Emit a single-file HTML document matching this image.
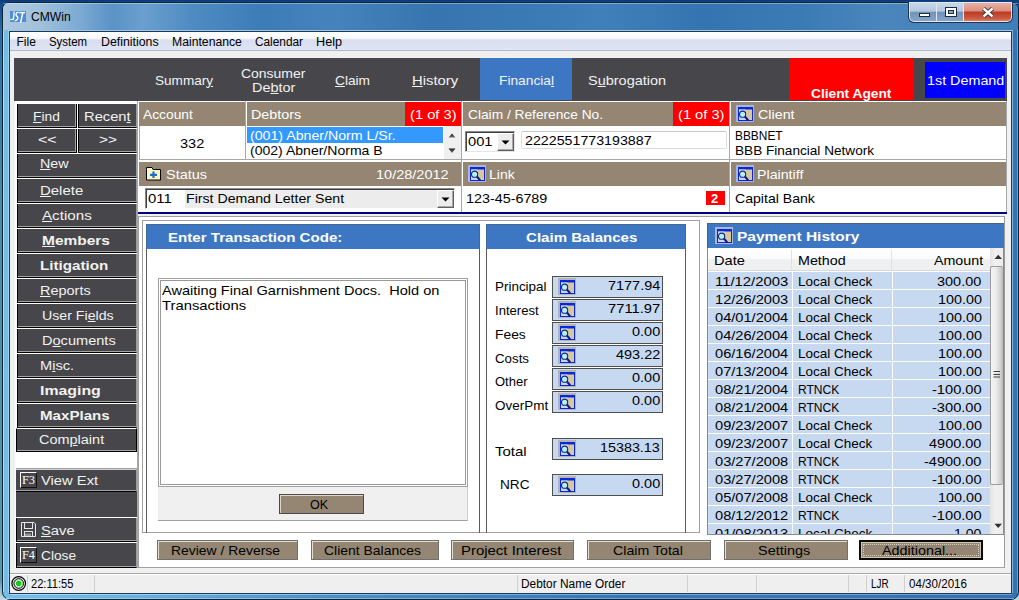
<!DOCTYPE html>
<html><head><meta charset="utf-8"><title>CMWin</title>
<style>
*{margin:0;padding:0;box-sizing:border-box}
html,body{width:1019px;height:600px;overflow:hidden;background:#3f86b0}
body{position:relative;font-family:"Liberation Sans", sans-serif;color:#000}
.a{position:absolute}
.t{position:absolute;white-space:nowrap;line-height:1;transform-origin:0 0}
.nb{position:absolute;background:#47474b;border-left:1px solid #000;border-bottom:1px solid #000;border-right:1px solid #9c9c9c;box-shadow:inset 0 -1px 0 #a4a4a4}
u{text-decoration:underline;text-underline-offset:1px;text-decoration-thickness:1px}
</style></head><body>
<div class="a" style="left:0;top:0;width:1019px;height:600px;background:linear-gradient(180deg,#0c3a74 0,#104888 3px,#2a6ea6 30px,#4a8a9c 200px,#5a98a8 580px,#c8dce4 600px)"></div>
<div class="a" style="left:2px;top:2px;width:1017px;height:598px;border-radius:7px 7px 8px 8px;border:1px solid #0e2438;background:linear-gradient(90deg,#76bde6 0,#6cb0dc 120px,#4d8fc4 320px,#3a78b4 600px,#3672ae 1019px)"></div>
<div class="a" style="left:3px;top:3px;width:1015px;height:27px;border-radius:6px 6px 0 0;background:linear-gradient(90deg,#adc8df 0,#a2c2dc 35px,#7eabd3 75px,#5a93c6 110px,#6a9fcf 140px,#4e8bc2 190px,#3c7cb7 260px,#4583bd 330px,#3775b0 430px,#3a7ab4 520px,#4080ba 600px,#3474b0 700px,#3b7bb5 800px,#4a86bc 880px,#3f7fb8 1015px)"></div>
<div class="a" style="left:3px;top:3px;width:1015px;height:1px;background:rgba(255,255,255,0.35);border-radius:6px 6px 0 0"></div>
<div class="a" style="left:1011px;top:30px;width:1px;height:564px;background:#1c3550"></div>
<div class="a" style="left:1012px;top:30px;width:1px;height:563px;background:#84b4e0"></div>
<div class="a" style="left:1017px;top:30px;width:1px;height:563px;background:#6aa0d4"></div>
<div class="a" style="left:3px;top:30px;width:1px;height:562px;background:#a8dcf8"></div>
<div class="a" style="left:8px;top:30px;width:1px;height:563px;background:#9cd2f2"></div>
<svg class="a" style="left:10px;top:11px" width="17" height="12" viewBox="0 0 17 12"><rect x="0" y="0" width="16" height="11" fill="#4f8ed4"/><path d="M4.2 0.5 L3.4 8.2 L0.3 8.6" stroke="#fff" stroke-width="1.3" fill="none"/><path d="M8.6 1.4 Q6.2 1 6 3.4 Q6 4.6 7.2 5.4 Q8.4 6.2 7.6 8 Q7 9.6 4.6 9.8" stroke="#fff" stroke-width="1.3" fill="none"/><path d="M9.2 1.6 L15 1.6" stroke="#fff" stroke-width="1.4" fill="none"/><path d="M12.8 1.6 L10.6 11.6" stroke="#fff" stroke-width="1.5" fill="none"/></svg>
<div class="a" style="left:908px;top:2px;width:105px;height:21px;border-radius:0 0 6px 6px;background:#1e3450"></div>
<div class="a" style="left:909px;top:2px;width:103px;height:20px;border-radius:0 0 5px 5px;overflow:hidden;background:#dfe8f2"><div class="a" style="left:1px;top:1px;width:26px;height:18px;border-radius:0 0 0 4px;background:linear-gradient(180deg,#c9d9ea 0,#b4c8de 45%,#7193b9 52%,#86a6c8 100%)"></div><div class="a" style="left:28px;top:1px;width:26px;height:18px;background:linear-gradient(180deg,#c9d9ea 0,#b4c8de 45%,#7193b9 52%,#86a6c8 100%)"></div><div class="a" style="left:55px;top:1px;width:47px;height:18px;border-radius:0 0 4px 0;background:linear-gradient(180deg,#e9b0a4 0,#dc9080 42%,#bb3c24 52%,#cc5a40 85%,#dc7c60 100%)"></div></div>
<div class="a" style="left:919px;top:13px;width:11px;height:4px;background:#fff;border:1px solid #1c2c40"></div>
<div class="a" style="left:945px;top:7px;width:12px;height:10px;background:#fff;border:1px solid #1c2c40"></div>
<div class="a" style="left:948px;top:10px;width:6px;height:4px;background:#8aa8c8;border:1px solid #1c2c40"></div>
<svg class="a" style="left:981px;top:7px" width="14" height="11" viewBox="0 0 14 11"><path d="M2.5 1.5 L11.5 9.5 M11.5 1.5 L2.5 9.5" stroke="#2a2a2a" stroke-width="4.2"/><path d="M2.5 1.5 L11.5 9.5 M11.5 1.5 L2.5 9.5" stroke="#fff" stroke-width="2.4"/></svg>
<div class="a" style="left:9px;top:30px;width:1003px;height:1px;background:#9ec6e6"></div>
<div class="a" style="left:9px;top:31px;width:1003px;height:563px;background:#f0f0f0;border:1px solid #1e3a58"></div>
<div class="a" style="left:10px;top:594px;width:1002px;height:1px;background:linear-gradient(90deg,#a8dcf8,#78aee0 500px,#6aa0d4)"></div>
<div class="a" style="left:6px;top:598px;width:1008px;height:1px;background:linear-gradient(90deg,#a0d4f4,#70a8dc 500px,#6aa0d4)"></div>
<div class="a" style="left:10px;top:32px;width:1001px;height:19px;background:linear-gradient(180deg,#ffffff 0,#f7f8fc 35%,#d9ddee 45%,#dce1f1 75%,#e0e6f4 100%);border-bottom:1px solid #b4b9c8"></div>
<div class="a" style="left:14px;top:58px;width:993px;height:43px;background:#47474b"></div>
<div class="a" style="left:480px;top:58px;width:92px;height:42px;background:#3d77c4"></div>
<div class="a" style="left:789px;top:58px;width:125px;height:42px;background:#ff0000"></div>
<div class="a" style="left:925px;top:62px;width:80px;height:36px;background:#0000ff"></div>
<div class="a" style="left:15px;top:101px;width:123px;height:467px;background:#fff"></div>
<div class="a" style="left:137px;top:101px;width:1px;height:467px;background:#a8a8a8"></div>
<div class="nb" style="left:17px;top:104px;width:60px;height:24px;border-right-color:#000;box-shadow:inset -1px -1px 0 #a4a4a4"></div>
<div class="nb" style="left:78px;top:104px;width:59px;height:24px"></div>
<div class="nb" style="left:17px;top:129px;width:60px;height:24px;border-right-color:#000;box-shadow:inset -1px -1px 0 #a4a4a4"></div>
<div class="nb" style="left:78px;top:129px;width:59px;height:24px"></div>
<div class="nb" style="left:17px;top:154px;width:120px;height:24px"></div>
<div class="nb" style="left:17px;top:179px;width:120px;height:24px"></div>
<div class="nb" style="left:17px;top:204px;width:120px;height:24px"></div>
<div class="nb" style="left:17px;top:229px;width:120px;height:24px"></div>
<div class="nb" style="left:17px;top:254px;width:120px;height:24px"></div>
<div class="nb" style="left:17px;top:279px;width:120px;height:24px"></div>
<div class="nb" style="left:17px;top:304px;width:120px;height:24px"></div>
<div class="nb" style="left:17px;top:329px;width:120px;height:24px"></div>
<div class="nb" style="left:17px;top:354px;width:120px;height:24px"></div>
<div class="nb" style="left:17px;top:379px;width:120px;height:24px"></div>
<div class="nb" style="left:17px;top:404px;width:120px;height:24px"></div>
<div class="nb" style="left:16px;top:428px;width:121px;height:24px;border-right-color:#000;border-top:1px solid #fff"></div>
<div class="a" style="left:16px;top:468px;width:121px;height:1px;background:#a0a0a0"></div>
<div class="nb" style="left:16px;top:469px;width:121px;height:23px;border-left:none;border-top:1px solid #d0d0d0"></div>
<div class="a" style="left:20px;top:472px;width:17px;height:16px;background:#47474b;border-top:1px solid #fff;border-left:1px solid #fff;border-right:1px solid #111;border-bottom:1px solid #111"></div>
<div class="a" style="left:16px;top:492px;width:121px;height:25px;background:#47474b"></div>
<div class="nb" style="left:16px;top:518px;width:121px;height:24px"></div>
<svg class="a" style="left:20px;top:521px" width="17" height="17" viewBox="0 0 17 17"><path d="M1.5 1.5 H14 L15.5 3 V15.5 H1.5 Z" fill="none" stroke="#e8e8e8" stroke-width="1"/><rect x="4.5" y="1.5" width="8" height="6" fill="none" stroke="#e8e8e8"/><rect x="4.5" y="10.5" width="8" height="5" fill="none" stroke="#e8e8e8"/><path d="M6 12.5 V15 M8 12.5 V15 M10 12.5 V15" stroke="#e8e8e8"/></svg>
<div class="nb" style="left:16px;top:543px;width:121px;height:25px"></div>
<div class="a" style="left:20px;top:547px;width:17px;height:16px;background:#47474b;border-top:1px solid #fff;border-left:1px solid #fff;border-right:1px solid #111;border-bottom:1px solid #111"></div>
<div class="a" style="left:138px;top:101px;width:869px;height:112px;background:#fff"></div>
<div class="a" style="left:139px;top:126px;width:1px;height:33px;background:#a8a8a8"></div>
<div class="a" style="left:139px;top:159px;width:867px;height:1px;background:#a8a8a8"></div>
<div class="a" style="left:139px;top:160px;width:867px;height:2px;background:#fff"></div>
<div class="a" style="left:245px;top:101px;width:1px;height:58px;background:#a8a8a8"></div>
<div class="a" style="left:461px;top:101px;width:1px;height:111px;background:#a8a8a8"></div>
<div class="a" style="left:729px;top:101px;width:1px;height:111px;background:#a8a8a8"></div>
<div class="a" style="left:1006px;top:101px;width:1px;height:111px;background:#a8a8a8"></div>
<div class="a" style="left:139px;top:102px;width:106px;height:24px;background:#948672"></div>
<div class="a" style="left:247px;top:102px;width:214px;height:24px;background:#948672"></div>
<div class="a" style="left:405px;top:102px;width:56px;height:24px;background:#ff0000"></div>
<div class="a" style="left:247px;top:127px;width:196px;height:16px;background:#3399ff"></div>
<div class="a" style="left:444px;top:126px;width:17px;height:33px;background:#f0f0f0"></div>
<svg class="a" style="left:448px;top:132px" width="10" height="24" viewBox="0 0 10 24"><defs><linearGradient id="ag" x1="0" y1="0" x2="0" y2="1"><stop offset="0" stop-color="#202020"/><stop offset="1" stop-color="#707070"/></linearGradient></defs><path d="M0.5 5.5 L4 1.5 L7.5 5.5 Z" fill="url(#ag)"/><path d="M0.5 16.5 L7.5 16.5 L4 21 Z" fill="url(#ag)"/></svg>
<div class="a" style="left:463px;top:102px;width:266px;height:24px;background:#948672"></div>
<div class="a" style="left:673px;top:102px;width:56px;height:24px;background:#ff0000"></div>
<div class="a" style="left:465px;top:131px;width:50px;height:21px;background:#fff;border:1px solid #8a8a8a;border-right-color:#e4e4e4;border-bottom-color:#e4e4e4;box-shadow:inset 1px 1px 0 #404040"></div>
<div class="a" style="left:497px;top:133px;width:17px;height:18px;background:#ececec;border:1px solid #fff;border-right-color:#606060;border-bottom-color:#606060;box-shadow:inset -1px -1px 0 #a8a8a8"></div>
<svg class="a" style="left:501px;top:140px" width="9" height="5"><path d="M0.5 0.5 H8.5 L4.5 4.5 Z" fill="#000"/></svg>
<div class="a" style="left:521px;top:131px;width:206px;height:18px;background:#fff;border:1px solid #dcdcdc;border-top-color:#c8c8c8;border-radius:2px"></div>
<div class="a" style="left:731px;top:102px;width:275px;height:24px;background:#948672"></div>
<svg class="a" style="left:736px;top:105px" width="18" height="17" viewBox="0 0 18 17"><rect x="0" y="0" width="18" height="17" fill="#aab6d8"/><rect x="2" y="2" width="15" height="14" fill="#0a28d8"/><rect x="3" y="4.5" width="13" height="10.5" fill="#d8c8a0"/><rect x="3" y="4.5" width="6.5" height="10.5" fill="#c8d4f8"/><line x1="8.8" y1="11.4" x2="12.2" y2="15.4" stroke="#0a1a90" stroke-width="2.2"/><circle cx="6.6" cy="9.2" r="3.1" fill="#b4f0f4" stroke="#1a2a70" stroke-width="1.1"/></svg>
<div class="a" style="left:139px;top:162px;width:322px;height:24px;background:#948672"></div>
<svg class="a" style="left:145px;top:166px" width="17" height="15" viewBox="0 0 17 15"><path d="M1.5 3.5 V1.5 H7 L8 3.5 H15.5 V14 H1.5 Z" fill="#fff4c8" stroke="#000" stroke-width="1"/><path d="M8.5 5.5 V12 M5 8.8 H12" stroke="#1874c0" stroke-width="2.2"/></svg>
<div class="a" style="left:145px;top:188px;width:310px;height:21px;background:#ececec;border:1px solid #8a8a8a;border-right-color:#fff;border-bottom-color:#fff;box-shadow:inset 1px 1px 0 #404040"></div>
<div class="a" style="left:147px;top:190px;width:38px;height:18px;background:#fff"></div>
<div class="a" style="left:437px;top:190px;width:17px;height:18px;background:#ececec;border:1px solid #fff;border-right-color:#606060;border-bottom-color:#606060;box-shadow:inset -1px -1px 0 #a8a8a8"></div>
<svg class="a" style="left:441px;top:197px" width="9" height="5"><path d="M0.5 0.5 H8.5 L4.5 4.5 Z" fill="#000"/></svg>
<div class="a" style="left:463px;top:162px;width:266px;height:24px;background:#948672"></div>
<svg class="a" style="left:468px;top:165px" width="18" height="17" viewBox="0 0 18 17"><rect x="0" y="0" width="18" height="17" fill="#aab6d8"/><rect x="2" y="2" width="15" height="14" fill="#0a28d8"/><rect x="3" y="4.5" width="13" height="10.5" fill="#d8c8a0"/><rect x="3" y="4.5" width="6.5" height="10.5" fill="#c8d4f8"/><line x1="8.8" y1="11.4" x2="12.2" y2="15.4" stroke="#0a1a90" stroke-width="2.2"/><circle cx="6.6" cy="9.2" r="3.1" fill="#b4f0f4" stroke="#1a2a70" stroke-width="1.1"/></svg>
<div class="a" style="left:706px;top:191px;width:19px;height:14px;background:#ff0000"></div>
<div class="a" style="left:731px;top:162px;width:275px;height:24px;background:#948672"></div>
<svg class="a" style="left:736px;top:165px" width="18" height="17" viewBox="0 0 18 17"><rect x="0" y="0" width="18" height="17" fill="#aab6d8"/><rect x="2" y="2" width="15" height="14" fill="#0a28d8"/><rect x="3" y="4.5" width="13" height="10.5" fill="#d8c8a0"/><rect x="3" y="4.5" width="6.5" height="10.5" fill="#c8d4f8"/><line x1="8.8" y1="11.4" x2="12.2" y2="15.4" stroke="#0a1a90" stroke-width="2.2"/><circle cx="6.6" cy="9.2" r="3.1" fill="#b4f0f4" stroke="#1a2a70" stroke-width="1.1"/></svg>
<div class="a" style="left:138px;top:212px;width:869px;height:2px;background:#000080"></div>
<div class="a" style="left:138px;top:216px;width:867px;height:352px;background:#fff;border:1px solid #a0a0a0;border-right-color:#9a9a9a"></div>
<div class="a" style="left:142px;top:220px;width:558px;height:313px;border:1px solid #a0a0a0"></div>
<div class="a" style="left:146px;top:224px;width:334px;height:309px;border:1px solid #5a5a5a;border-bottom:none"></div>
<div class="a" style="left:146px;top:224px;width:334px;height:25px;background:#3d76c3;border:1px solid #44689a;border-bottom:none"></div>
<div class="a" style="left:158px;top:278px;width:310px;height:209px;background:#fff;border:1px solid #a0a0a0;box-shadow:inset 0 0 0 1px #fff,inset 0 0 0 2px #9a9a9a"></div>
<div class="a" style="left:158px;top:487px;width:310px;height:34px;background:#f0f0f0;border-bottom:1px solid #a0a0a0;border-right:1px solid #d0d0d0"></div>
<div class="a" style="left:279px;top:494px;width:85px;height:20px;background:#948672;border:1px solid #4a4a4a;box-shadow:inset 1px 1px 0 #e0d8c8"></div>
<div class="a" style="left:486px;top:224px;width:200px;height:309px;border:1px solid #5a5a5a;border-bottom:none"></div>
<div class="a" style="left:486px;top:224px;width:200px;height:25px;background:#3d76c3;border:1px solid #44689a;border-bottom:none"></div>
<div class="a" style="left:552px;top:276px;width:111px;height:22px;background:#c6d9f1;border:1px solid #4e4e4e"></div>
<svg class="a" style="left:558px;top:278px" width="18" height="17" viewBox="0 0 18 17"><rect x="0" y="0" width="18" height="17" fill="#b4b4b4"/><rect x="2" y="2" width="15" height="14" fill="#0a28d8"/><rect x="3" y="4.5" width="13" height="10.5" fill="#d8c8a0"/><rect x="3" y="4.5" width="6.5" height="10.5" fill="#c8d4f8"/><line x1="8.8" y1="11.4" x2="12.2" y2="15.4" stroke="#0a1a90" stroke-width="2.2"/><circle cx="6.6" cy="9.2" r="3.1" fill="#b4f0f4" stroke="#1a2a70" stroke-width="1.1"/></svg>
<div class="a" style="left:552px;top:299px;width:111px;height:22px;background:#c6d9f1;border:1px solid #4e4e4e"></div>
<svg class="a" style="left:558px;top:301px" width="18" height="17" viewBox="0 0 18 17"><rect x="0" y="0" width="18" height="17" fill="#b4b4b4"/><rect x="2" y="2" width="15" height="14" fill="#0a28d8"/><rect x="3" y="4.5" width="13" height="10.5" fill="#d8c8a0"/><rect x="3" y="4.5" width="6.5" height="10.5" fill="#c8d4f8"/><line x1="8.8" y1="11.4" x2="12.2" y2="15.4" stroke="#0a1a90" stroke-width="2.2"/><circle cx="6.6" cy="9.2" r="3.1" fill="#b4f0f4" stroke="#1a2a70" stroke-width="1.1"/></svg>
<div class="a" style="left:552px;top:322px;width:111px;height:22px;background:#c6d9f1;border:1px solid #4e4e4e"></div>
<svg class="a" style="left:558px;top:324px" width="18" height="17" viewBox="0 0 18 17"><rect x="0" y="0" width="18" height="17" fill="#b4b4b4"/><rect x="2" y="2" width="15" height="14" fill="#0a28d8"/><rect x="3" y="4.5" width="13" height="10.5" fill="#d8c8a0"/><rect x="3" y="4.5" width="6.5" height="10.5" fill="#c8d4f8"/><line x1="8.8" y1="11.4" x2="12.2" y2="15.4" stroke="#0a1a90" stroke-width="2.2"/><circle cx="6.6" cy="9.2" r="3.1" fill="#b4f0f4" stroke="#1a2a70" stroke-width="1.1"/></svg>
<div class="a" style="left:552px;top:345px;width:111px;height:22px;background:#c6d9f1;border:1px solid #4e4e4e"></div>
<svg class="a" style="left:558px;top:347px" width="18" height="17" viewBox="0 0 18 17"><rect x="0" y="0" width="18" height="17" fill="#b4b4b4"/><rect x="2" y="2" width="15" height="14" fill="#0a28d8"/><rect x="3" y="4.5" width="13" height="10.5" fill="#d8c8a0"/><rect x="3" y="4.5" width="6.5" height="10.5" fill="#c8d4f8"/><line x1="8.8" y1="11.4" x2="12.2" y2="15.4" stroke="#0a1a90" stroke-width="2.2"/><circle cx="6.6" cy="9.2" r="3.1" fill="#b4f0f4" stroke="#1a2a70" stroke-width="1.1"/></svg>
<div class="a" style="left:552px;top:368px;width:111px;height:22px;background:#c6d9f1;border:1px solid #4e4e4e"></div>
<svg class="a" style="left:558px;top:370px" width="18" height="17" viewBox="0 0 18 17"><rect x="0" y="0" width="18" height="17" fill="#b4b4b4"/><rect x="2" y="2" width="15" height="14" fill="#0a28d8"/><rect x="3" y="4.5" width="13" height="10.5" fill="#d8c8a0"/><rect x="3" y="4.5" width="6.5" height="10.5" fill="#c8d4f8"/><line x1="8.8" y1="11.4" x2="12.2" y2="15.4" stroke="#0a1a90" stroke-width="2.2"/><circle cx="6.6" cy="9.2" r="3.1" fill="#b4f0f4" stroke="#1a2a70" stroke-width="1.1"/></svg>
<div class="a" style="left:552px;top:391px;width:111px;height:22px;background:#c6d9f1;border:1px solid #4e4e4e"></div>
<svg class="a" style="left:558px;top:393px" width="18" height="17" viewBox="0 0 18 17"><rect x="0" y="0" width="18" height="17" fill="#b4b4b4"/><rect x="2" y="2" width="15" height="14" fill="#0a28d8"/><rect x="3" y="4.5" width="13" height="10.5" fill="#d8c8a0"/><rect x="3" y="4.5" width="6.5" height="10.5" fill="#c8d4f8"/><line x1="8.8" y1="11.4" x2="12.2" y2="15.4" stroke="#0a1a90" stroke-width="2.2"/><circle cx="6.6" cy="9.2" r="3.1" fill="#b4f0f4" stroke="#1a2a70" stroke-width="1.1"/></svg>
<div class="a" style="left:552px;top:438px;width:111px;height:22px;background:#c6d9f1;border:1px solid #4e4e4e"></div>
<svg class="a" style="left:558px;top:440px" width="18" height="17" viewBox="0 0 18 17"><rect x="0" y="0" width="18" height="17" fill="#b4b4b4"/><rect x="2" y="2" width="15" height="14" fill="#0a28d8"/><rect x="3" y="4.5" width="13" height="10.5" fill="#d8c8a0"/><rect x="3" y="4.5" width="6.5" height="10.5" fill="#c8d4f8"/><line x1="8.8" y1="11.4" x2="12.2" y2="15.4" stroke="#0a1a90" stroke-width="2.2"/><circle cx="6.6" cy="9.2" r="3.1" fill="#b4f0f4" stroke="#1a2a70" stroke-width="1.1"/></svg>
<div class="a" style="left:552px;top:474px;width:111px;height:22px;background:#c6d9f1;border:1px solid #4e4e4e"></div>
<svg class="a" style="left:558px;top:476px" width="18" height="17" viewBox="0 0 18 17"><rect x="0" y="0" width="18" height="17" fill="#b4b4b4"/><rect x="2" y="2" width="15" height="14" fill="#0a28d8"/><rect x="3" y="4.5" width="13" height="10.5" fill="#d8c8a0"/><rect x="3" y="4.5" width="6.5" height="10.5" fill="#c8d4f8"/><line x1="8.8" y1="11.4" x2="12.2" y2="15.4" stroke="#0a1a90" stroke-width="2.2"/><circle cx="6.6" cy="9.2" r="3.1" fill="#b4f0f4" stroke="#1a2a70" stroke-width="1.1"/></svg>
<div class="a" style="left:707px;top:223px;width:297px;height:312px;background:#fff;border:1px solid #8a8a8a"></div>
<div class="a" style="left:707px;top:223px;width:297px;height:25px;background:#3d76c3;border-top:1px solid #4a6280;border-left:1px solid #4a6280"></div>
<svg class="a" style="left:715px;top:227px" width="18" height="17" viewBox="0 0 18 17"><rect x="0" y="0" width="18" height="17" fill="#aab6d8"/><rect x="2" y="2" width="15" height="14" fill="#0a28d8"/><rect x="3" y="4.5" width="13" height="10.5" fill="#d8c8a0"/><rect x="3" y="4.5" width="6.5" height="10.5" fill="#c8d4f8"/><line x1="8.8" y1="11.4" x2="12.2" y2="15.4" stroke="#0a1a90" stroke-width="2.2"/><circle cx="6.6" cy="9.2" r="3.1" fill="#b4f0f4" stroke="#1a2a70" stroke-width="1.1"/></svg>
<div class="a" style="left:708px;top:248px;width:282px;height:23px;background:linear-gradient(180deg,#ffffff 0,#fafbfb 50%,#f0f1f2 51%,#eeeff0 100%);border-bottom:1px solid #dadada"></div>
<div class="a" style="left:791px;top:250px;width:1px;height:20px;background:#e0e0e0"></div>
<div class="a" style="left:891px;top:250px;width:1px;height:20px;background:#e0e0e0"></div>
<div class="a" style="left:708px;top:271px;width:282px;height:263px;overflow:hidden;background:#fff"><div class="a" style="left:0;top:1px;width:84px;height:17px;background:#c6d9f1"></div><div class="a" style="left:85px;top:1px;width:99px;height:17px;background:#c6d9f1"></div><div class="a" style="left:185px;top:1px;width:97px;height:17px;background:#c6d9f1"></div><div class="a" style="left:0;top:19px;width:84px;height:17px;background:#c6d9f1"></div><div class="a" style="left:85px;top:19px;width:99px;height:17px;background:#c6d9f1"></div><div class="a" style="left:185px;top:19px;width:97px;height:17px;background:#c6d9f1"></div><div class="a" style="left:0;top:37px;width:84px;height:17px;background:#c6d9f1"></div><div class="a" style="left:85px;top:37px;width:99px;height:17px;background:#c6d9f1"></div><div class="a" style="left:185px;top:37px;width:97px;height:17px;background:#c6d9f1"></div><div class="a" style="left:0;top:55px;width:84px;height:17px;background:#c6d9f1"></div><div class="a" style="left:85px;top:55px;width:99px;height:17px;background:#c6d9f1"></div><div class="a" style="left:185px;top:55px;width:97px;height:17px;background:#c6d9f1"></div><div class="a" style="left:0;top:73px;width:84px;height:17px;background:#c6d9f1"></div><div class="a" style="left:85px;top:73px;width:99px;height:17px;background:#c6d9f1"></div><div class="a" style="left:185px;top:73px;width:97px;height:17px;background:#c6d9f1"></div><div class="a" style="left:0;top:91px;width:84px;height:17px;background:#c6d9f1"></div><div class="a" style="left:85px;top:91px;width:99px;height:17px;background:#c6d9f1"></div><div class="a" style="left:185px;top:91px;width:97px;height:17px;background:#c6d9f1"></div><div class="a" style="left:0;top:109px;width:84px;height:17px;background:#c6d9f1"></div><div class="a" style="left:85px;top:109px;width:99px;height:17px;background:#c6d9f1"></div><div class="a" style="left:185px;top:109px;width:97px;height:17px;background:#c6d9f1"></div><div class="a" style="left:0;top:127px;width:84px;height:17px;background:#c6d9f1"></div><div class="a" style="left:85px;top:127px;width:99px;height:17px;background:#c6d9f1"></div><div class="a" style="left:185px;top:127px;width:97px;height:17px;background:#c6d9f1"></div><div class="a" style="left:0;top:145px;width:84px;height:17px;background:#c6d9f1"></div><div class="a" style="left:85px;top:145px;width:99px;height:17px;background:#c6d9f1"></div><div class="a" style="left:185px;top:145px;width:97px;height:17px;background:#c6d9f1"></div><div class="a" style="left:0;top:163px;width:84px;height:17px;background:#c6d9f1"></div><div class="a" style="left:85px;top:163px;width:99px;height:17px;background:#c6d9f1"></div><div class="a" style="left:185px;top:163px;width:97px;height:17px;background:#c6d9f1"></div><div class="a" style="left:0;top:181px;width:84px;height:17px;background:#c6d9f1"></div><div class="a" style="left:85px;top:181px;width:99px;height:17px;background:#c6d9f1"></div><div class="a" style="left:185px;top:181px;width:97px;height:17px;background:#c6d9f1"></div><div class="a" style="left:0;top:199px;width:84px;height:17px;background:#c6d9f1"></div><div class="a" style="left:85px;top:199px;width:99px;height:17px;background:#c6d9f1"></div><div class="a" style="left:185px;top:199px;width:97px;height:17px;background:#c6d9f1"></div><div class="a" style="left:0;top:217px;width:84px;height:17px;background:#c6d9f1"></div><div class="a" style="left:85px;top:217px;width:99px;height:17px;background:#c6d9f1"></div><div class="a" style="left:185px;top:217px;width:97px;height:17px;background:#c6d9f1"></div><div class="a" style="left:0;top:235px;width:84px;height:17px;background:#c6d9f1"></div><div class="a" style="left:85px;top:235px;width:99px;height:17px;background:#c6d9f1"></div><div class="a" style="left:185px;top:235px;width:97px;height:17px;background:#c6d9f1"></div><div class="a" style="left:0;top:253px;width:84px;height:17px;background:#c6d9f1"></div><div class="a" style="left:85px;top:253px;width:99px;height:17px;background:#c6d9f1"></div><div class="a" style="left:185px;top:253px;width:97px;height:17px;background:#c6d9f1"></div><div class="a" style="left:-708px;top:-271px;width:1019px;height:600px"><div class="t" style="left:714.80px;top:275.00px;font-size:13px;color:#000;transform:scaleX(1.1425);">11/12/2003</div><div class="t" style="left:798.10px;top:275.00px;font-size:13px;color:#000;transform:scaleX(1.0390);">Local Check</div><div class="t" style="left:937.10px;top:275.00px;font-size:13px;color:#000;transform:scaleX(1.1144);">300.00</div><div class="t" style="left:714.80px;top:293.00px;font-size:13px;color:#000;transform:scaleX(1.1252);">12/26/2003</div><div class="t" style="left:798.10px;top:293.00px;font-size:13px;color:#000;transform:scaleX(1.0390);">Local Check</div><div class="t" style="left:937.50px;top:293.00px;font-size:13px;color:#000;transform:scaleX(1.1041);">100.00</div><div class="t" style="left:714.80px;top:311.00px;font-size:13px;color:#000;transform:scaleX(1.1252);">04/01/2004</div><div class="t" style="left:798.10px;top:311.00px;font-size:13px;color:#000;transform:scaleX(1.0390);">Local Check</div><div class="t" style="left:937.50px;top:311.00px;font-size:13px;color:#000;transform:scaleX(1.1041);">100.00</div><div class="t" style="left:714.80px;top:329.00px;font-size:13px;color:#000;transform:scaleX(1.1252);">04/26/2004</div><div class="t" style="left:798.10px;top:329.00px;font-size:13px;color:#000;transform:scaleX(1.0390);">Local Check</div><div class="t" style="left:937.50px;top:329.00px;font-size:13px;color:#000;transform:scaleX(1.1041);">100.00</div><div class="t" style="left:714.80px;top:347.00px;font-size:13px;color:#000;transform:scaleX(1.1252);">06/16/2004</div><div class="t" style="left:798.10px;top:347.00px;font-size:13px;color:#000;transform:scaleX(1.0390);">Local Check</div><div class="t" style="left:937.50px;top:347.00px;font-size:13px;color:#000;transform:scaleX(1.1041);">100.00</div><div class="t" style="left:714.80px;top:365.00px;font-size:13px;color:#000;transform:scaleX(1.1252);">07/13/2004</div><div class="t" style="left:798.10px;top:365.00px;font-size:13px;color:#000;transform:scaleX(1.0390);">Local Check</div><div class="t" style="left:937.50px;top:365.00px;font-size:13px;color:#000;transform:scaleX(1.1041);">100.00</div><div class="t" style="left:714.80px;top:383.00px;font-size:13px;color:#000;transform:scaleX(1.1252);">08/21/2004</div><div class="t" style="left:798.10px;top:383.00px;font-size:13px;color:#000;transform:scaleX(0.9277);">RTNCK</div><div class="t" style="left:931.80px;top:383.00px;font-size:13px;color:#000;transform:scaleX(1.1255);">-100.00</div><div class="t" style="left:714.80px;top:401.00px;font-size:13px;color:#000;transform:scaleX(1.1252);">08/21/2004</div><div class="t" style="left:798.10px;top:401.00px;font-size:13px;color:#000;transform:scaleX(0.9277);">RTNCK</div><div class="t" style="left:931.80px;top:401.00px;font-size:13px;color:#000;transform:scaleX(1.1255);">-300.00</div><div class="t" style="left:714.80px;top:419.00px;font-size:13px;color:#000;transform:scaleX(1.1252);">09/23/2007</div><div class="t" style="left:798.10px;top:419.00px;font-size:13px;color:#000;transform:scaleX(1.0390);">Local Check</div><div class="t" style="left:937.50px;top:419.00px;font-size:13px;color:#000;transform:scaleX(1.1041);">100.00</div><div class="t" style="left:714.80px;top:437.00px;font-size:13px;color:#000;transform:scaleX(1.1252);">09/23/2007</div><div class="t" style="left:798.10px;top:437.00px;font-size:13px;color:#000;transform:scaleX(1.0390);">Local Check</div><div class="t" style="left:929.00px;top:437.00px;font-size:13px;color:#000;transform:scaleX(1.1152);">4900.00</div><div class="t" style="left:714.80px;top:455.00px;font-size:13px;color:#000;transform:scaleX(1.1252);">03/27/2008</div><div class="t" style="left:798.10px;top:455.00px;font-size:13px;color:#000;transform:scaleX(0.9277);">RTNCK</div><div class="t" style="left:924.00px;top:455.00px;font-size:13px;color:#000;transform:scaleX(1.1187);">-4900.00</div><div class="t" style="left:714.80px;top:473.00px;font-size:13px;color:#000;transform:scaleX(1.1252);">03/27/2008</div><div class="t" style="left:798.10px;top:473.00px;font-size:13px;color:#000;transform:scaleX(0.9277);">RTNCK</div><div class="t" style="left:931.80px;top:473.00px;font-size:13px;color:#000;transform:scaleX(1.1255);">-100.00</div><div class="t" style="left:714.80px;top:491.00px;font-size:13px;color:#000;transform:scaleX(1.1252);">05/07/2008</div><div class="t" style="left:798.10px;top:491.00px;font-size:13px;color:#000;transform:scaleX(1.0390);">Local Check</div><div class="t" style="left:937.50px;top:491.00px;font-size:13px;color:#000;transform:scaleX(1.1041);">100.00</div><div class="t" style="left:714.80px;top:509.00px;font-size:13px;color:#000;transform:scaleX(1.1252);">08/12/2012</div><div class="t" style="left:798.10px;top:509.00px;font-size:13px;color:#000;transform:scaleX(0.9277);">RTNCK</div><div class="t" style="left:931.80px;top:509.00px;font-size:13px;color:#000;transform:scaleX(1.1255);">-100.00</div><div class="t" style="left:714.80px;top:527.00px;font-size:13px;color:#000;transform:scaleX(1.1252);">01/08/2013</div><div class="t" style="left:798.10px;top:527.00px;font-size:13px;color:#000;transform:scaleX(1.0390);">Local Check</div><div class="t" style="left:953.90px;top:527.00px;font-size:13px;color:#000;transform:scaleX(1.0859);">1.00</div></div></div>
<div class="a" style="left:990px;top:248px;width:13px;height:286px;background:linear-gradient(90deg,#e4e4e4,#f0f0f0 40%,#ececec)"></div>
<div class="a" style="left:990px;top:266px;width:13px;height:219px;background:linear-gradient(90deg,#f4f4f4 0,#ececec 45%,#d4d4d4 80%,#c8c8c8 100%);border:1px solid #9c9c9c;border-right-color:#b8b8b8;border-radius:2px"></div>
<svg class="a" style="left:994px;top:254px" width="9" height="6"><path d="M0.5 5 L4.2 0.8 L8 5 Z" fill="#303030"/></svg>
<svg class="a" style="left:994px;top:523px" width="9" height="6"><path d="M0.5 0.8 L8 0.8 L4.2 5 Z" fill="#303030"/></svg>
<svg class="a" style="left:993px;top:370px" width="8" height="8"><path d="M0.5 1.5 H7 M0.5 4.5 H7 M0.5 7 H7" stroke="#404040" stroke-width="1.2"/></svg>
<div class="a" style="left:157px;top:540px;width:141px;height:20px;background:#948672;border:1px solid #707070;box-shadow:inset 1px 1px 0 #e4dccc"></div>
<div class="a" style="left:311px;top:540px;width:128px;height:20px;background:#948672;border:1px solid #707070;box-shadow:inset 1px 1px 0 #e4dccc"></div>
<div class="a" style="left:451px;top:540px;width:123px;height:20px;background:#948672;border:1px solid #707070;box-shadow:inset 1px 1px 0 #e4dccc"></div>
<div class="a" style="left:587px;top:540px;width:124px;height:20px;background:#948672;border:1px solid #707070;box-shadow:inset 1px 1px 0 #e4dccc"></div>
<div class="a" style="left:724px;top:540px;width:124px;height:20px;background:#948672;border:1px solid #707070;box-shadow:inset 1px 1px 0 #e4dccc"></div>
<div class="a" style="left:859px;top:540px;width:124px;height:20px;background:#948672;border:1px solid #0a0a0a;box-shadow:inset 0 0 0 1px #0a0a0a,inset 0 0 0 2px #cfc6b6"></div>
<div class="a" style="left:863px;top:544px;width:116px;height:12px;border:1px dotted #d8d0c0"></div>
<div class="a" style="left:10px;top:573px;width:1001px;height:20px;background:#f0efef;border-top:1px solid #a8a8a8;box-shadow:inset 0 1px 0 #fff"></div>
<svg class="a" style="left:11px;top:576px" width="16" height="16" viewBox="0 0 16 16"><circle cx="7.7" cy="7.5" r="6.8" fill="none" stroke="#000" stroke-width="1.2"/><circle cx="7.7" cy="7.5" r="4.8" fill="none" stroke="#000" stroke-width="1"/><circle cx="7.7" cy="7.5" r="3.8" fill="none" stroke="#40d040" stroke-width="0.8" stroke-dasharray="1.2 1"/><circle cx="7.7" cy="7.5" r="2.8" fill="#18c818"/></svg>
<div class="a" style="left:27px;top:575px;width:1px;height:17px;background:#d0d0d0"></div>
<div class="a" style="left:94px;top:575px;width:1px;height:17px;background:#d0d0d0"></div>
<div class="a" style="left:517px;top:575px;width:1px;height:17px;background:#d0d0d0"></div>
<div class="a" style="left:687px;top:575px;width:1px;height:17px;background:#d0d0d0"></div>
<div class="a" style="left:756px;top:575px;width:1px;height:17px;background:#d0d0d0"></div>
<div class="a" style="left:848px;top:575px;width:1px;height:17px;background:#d0d0d0"></div>
<div class="a" style="left:866px;top:575px;width:1px;height:17px;background:#d0d0d0"></div>
<div class="a" style="left:904px;top:575px;width:1px;height:17px;background:#d0d0d0"></div>
<div class="t" style="left:31.00px;top:11.00px;font-size:12px;color:#000;transform:scaleX(1.0071);">CMWin</div>
<div class="t" style="left:16.50px;top:36.00px;font-size:12px;color:#000;">File</div>
<div class="t" style="left:49.00px;top:36.00px;font-size:12px;color:#000;transform:scaleX(0.9509);">System</div>
<div class="t" style="left:100.90px;top:36.00px;font-size:12px;color:#000;transform:scaleX(1.0285);">Definitions</div>
<div class="t" style="left:171.90px;top:36.00px;font-size:12px;color:#000;transform:scaleX(1.0174);">Maintenance</div>
<div class="t" style="left:254.50px;top:36.00px;font-size:12px;color:#000;transform:scaleX(0.9853);">Calendar</div>
<div class="t" style="left:315.50px;top:36.00px;font-size:12px;color:#000;transform:scaleX(1.0554);">Help</div>
<div class="t" style="left:155.30px;top:74.00px;font-size:13px;color:#f2f2f2;transform:scaleX(1.0453);">Summar<u>y</u></div>
<div class="t" style="left:241.10px;top:67.00px;font-size:13px;color:#f2f2f2;transform:scaleX(1.0734);">Consumer</div>
<div class="t" style="left:252.20px;top:81.00px;font-size:13px;color:#f2f2f2;transform:scaleX(1.1122);">De<u>b</u>tor</div>
<div class="t" style="left:334.50px;top:74.00px;font-size:13px;color:#f2f2f2;transform:scaleX(1.0548);"><u>C</u>laim</div>
<div class="t" style="left:411.50px;top:74.00px;font-size:13px;color:#f2f2f2;transform:scaleX(1.1406);"><u>H</u>istory</div>
<div class="t" style="left:498.50px;top:74.00px;font-size:13px;color:#f2f2f2;transform:scaleX(1.0582);">Financia<u>l</u></div>
<div class="t" style="left:587.50px;top:74.00px;font-size:13px;color:#f2f2f2;transform:scaleX(1.1139);">S<u>u</u>brogation</div>
<div class="t" style="left:810.80px;top:87.00px;font-size:13px;font-weight:bold;color:#fff;transform:scaleX(1.0576);">Client Agent</div>
<div class="t" style="left:926.90px;top:74.00px;font-size:13px;color:#fff;transform:scaleX(1.1028);">1st Demand</div>
<div class="t" style="left:32.50px;top:110.00px;font-size:13px;color:#f2f2f2;transform:scaleX(1.0591);"><u>F</u>ind</div>
<div class="t" style="left:84.00px;top:110.00px;font-size:13px;color:#f2f2f2;transform:scaleX(1.1318);">Recen<u>t</u></div>
<div class="t" style="left:37.50px;top:133.00px;font-size:13px;color:#f2f2f2;transform:scaleX(1.2335);">&lt;&lt;</div>
<div class="t" style="left:99.00px;top:133.00px;font-size:13px;color:#f2f2f2;transform:scaleX(1.1806);">&gt;&gt;</div>
<div class="t" style="left:39.50px;top:158.00px;font-size:12.5px;color:#f2f2f2;transform:scaleX(1.1451);"><u>N</u>ew</div>
<div class="t" style="left:39.50px;top:185.00px;font-size:12.5px;color:#f2f2f2;transform:scaleX(1.1952);"><u>D</u>elete</div>
<div class="t" style="left:41.50px;top:210.00px;font-size:12.5px;color:#f2f2f2;transform:scaleX(1.2125);"><u>A</u>ctions</div>
<div class="t" style="left:41.50px;top:235.00px;font-size:12.5px;font-weight:bold;color:#f2f2f2;transform:scaleX(1.2383);"><u>M</u>embers</div>
<div class="t" style="left:40.00px;top:260.00px;font-size:12.5px;font-weight:bold;color:#f2f2f2;transform:scaleX(1.2127);">Litigation</div>
<div class="t" style="left:39.50px;top:285.00px;font-size:12.5px;color:#f2f2f2;transform:scaleX(1.1570);"><u>R</u>eports</div>
<div class="t" style="left:41.50px;top:310.00px;font-size:12.5px;color:#f2f2f2;transform:scaleX(1.1331);">User Fi<u>e</u>lds</div>
<div class="t" style="left:41.50px;top:335.00px;font-size:12.5px;color:#f2f2f2;transform:scaleX(1.1650);">D<u>o</u>cuments</div>
<div class="t" style="left:39.50px;top:360.00px;font-size:12.5px;color:#f2f2f2;transform:scaleX(1.1707);">M<u>i</u>sc.</div>
<div class="t" style="left:40.00px;top:385.00px;font-size:12.5px;font-weight:bold;color:#f2f2f2;transform:scaleX(1.2681);">Imaging</div>
<div class="t" style="left:39.50px;top:410.00px;font-size:12.5px;font-weight:bold;color:#f2f2f2;transform:scaleX(1.2087);">MaxPlans</div>
<div class="t" style="left:38.50px;top:434.00px;font-size:12.5px;color:#f2f2f2;transform:scaleX(1.1574);">Com<u>p</u>laint</div>
<div class="t" style="left:21.50px;top:474.00px;font-size:12.5px;color:#fff;transform:scaleX(0.9834);font-family:'Liberation Serif',serif;">F3</div>
<div class="t" style="left:41.00px;top:475.00px;font-size:12.5px;color:#f2f2f2;transform:scaleX(1.1813);">View Ext</div>
<div class="t" style="left:41.00px;top:525.00px;font-size:12.5px;color:#f2f2f2;transform:scaleX(1.1818);"><u>S</u>ave</div>
<div class="t" style="left:21.50px;top:549.00px;font-size:12.5px;color:#fff;transform:scaleX(0.9834);font-family:'Liberation Serif',serif;">F4</div>
<div class="t" style="left:41.00px;top:550.00px;font-size:12.5px;color:#f2f2f2;transform:scaleX(1.0979);">Close</div>
<div class="t" style="left:142.50px;top:108.00px;font-size:13px;color:#fff;transform:scaleX(1.0612);">Account</div>
<div class="t" style="left:180.00px;top:137.00px;font-size:13px;color:#000;transform:scaleX(1.1206);">332</div>
<div class="t" style="left:250.50px;top:108.00px;font-size:13px;color:#fff;transform:scaleX(1.1004);">Debtors</div>
<div class="t" style="left:409.50px;top:108.00px;font-size:13px;color:#fff;transform:scaleX(1.1322);">(1 of 3)</div>
<div class="t" style="left:249.90px;top:129.00px;font-size:13px;color:#fff;transform:scaleX(1.0899);">(001) Abner/Norm L/Sr.</div>
<div class="t" style="left:249.90px;top:144.00px;font-size:13px;color:#000;transform:scaleX(1.0801);">(002) Abner/Norma B</div>
<div class="t" style="left:467.70px;top:108.00px;font-size:13px;color:#fff;transform:scaleX(1.0560);">Claim / Reference No.</div>
<div class="t" style="left:678.00px;top:108.00px;font-size:13px;color:#fff;transform:scaleX(1.1272);">(1 of 3)</div>
<div class="t" style="left:467.70px;top:135.00px;font-size:13px;color:#000;transform:scaleX(1.1303);">001</div>
<div class="t" style="left:524.50px;top:134.00px;font-size:13px;color:#000;transform:scaleX(1.0943);">2222551773193887</div>
<div class="t" style="left:757.80px;top:108.00px;font-size:13px;color:#fff;transform:scaleX(1.1008);">Client</div>
<div class="t" style="left:735.00px;top:129.00px;font-size:13px;color:#000;transform:scaleX(0.9154);">BBBNET</div>
<div class="t" style="left:735.00px;top:144.00px;font-size:13px;color:#000;transform:scaleX(1.0458);">BBB Financial Network</div>
<div class="t" style="left:166.00px;top:168.00px;font-size:13px;color:#fff;transform:scaleX(1.1155);">Status</div>
<div class="t" style="left:376.20px;top:168.00px;font-size:13px;color:#fff;transform:scaleX(1.1158);">10/28/2012</div>
<div class="t" style="left:147.90px;top:192.00px;font-size:13px;color:#000;transform:scaleX(1.1452);">011</div>
<div class="t" style="left:186.10px;top:192.00px;font-size:13px;color:#000;transform:scaleX(1.0885);">First Demand Letter Sent</div>
<div class="t" style="left:489.30px;top:168.00px;font-size:13px;color:#fff;transform:scaleX(1.0805);">Link</div>
<div class="t" style="left:465.70px;top:192.00px;font-size:13px;color:#000;transform:scaleX(1.1026);">123-45-6789</div>
<div class="t" style="left:711.00px;top:192.00px;font-size:13px;font-weight:bold;color:#fff;">2</div>
<div class="t" style="left:757.20px;top:168.00px;font-size:13px;color:#fff;transform:scaleX(1.0940);">Plaintiff</div>
<div class="t" style="left:734.70px;top:192.00px;font-size:13px;color:#000;transform:scaleX(1.0836);">Capital Bank</div>
<div class="t" style="left:168.00px;top:231.00px;font-size:13px;font-weight:bold;color:#fff;transform:scaleX(1.1605);">Enter Transaction Code:</div>
<div class="t" style="left:162.40px;top:284.00px;font-size:13px;color:#000;transform:scaleX(1.1204);">Awaiting Final Garnishment Docs.&nbsp; Hold on</div>
<div class="t" style="left:162.40px;top:299.00px;font-size:13px;color:#000;transform:scaleX(1.1393);">Transactions</div>
<div class="t" style="left:310.20px;top:498.00px;font-size:13px;color:#000;transform:scaleX(0.9665);">OK</div>
<div class="t" style="left:526.00px;top:231.00px;font-size:13px;font-weight:bold;color:#fff;transform:scaleX(1.1587);">Claim Balances</div>
<div class="t" style="left:495.00px;top:280.00px;font-size:13px;color:#000;transform:scaleX(1.0336);">Principal</div>
<div class="t" style="left:607.70px;top:279.00px;font-size:13px;color:#000;transform:scaleX(1.1109);">7177.94</div>
<div class="t" style="left:495.00px;top:304.00px;font-size:13px;color:#000;transform:scaleX(1.0057);">Interest</div>
<div class="t" style="left:607.70px;top:302.00px;font-size:13px;color:#000;transform:scaleX(1.1348);">7711.97</div>
<div class="t" style="left:495.00px;top:328.00px;font-size:13px;color:#000;transform:scaleX(1.0643);">Fees</div>
<div class="t" style="left:631.70px;top:325.00px;font-size:13px;color:#000;transform:scaleX(1.1147);">0.00</div>
<div class="t" style="left:495.00px;top:352.00px;font-size:13px;color:#000;transform:scaleX(1.0238);">Costs</div>
<div class="t" style="left:615.70px;top:348.00px;font-size:13px;color:#000;transform:scaleX(1.1118);">493.22</div>
<div class="t" style="left:495.00px;top:375.00px;font-size:13px;color:#000;">Other</div>
<div class="t" style="left:631.70px;top:371.00px;font-size:13px;color:#000;transform:scaleX(1.1147);">0.00</div>
<div class="t" style="left:495.00px;top:399.00px;font-size:13px;color:#000;transform:scaleX(1.0358);">OverPmt</div>
<div class="t" style="left:631.70px;top:394.00px;font-size:13px;color:#000;transform:scaleX(1.1147);">0.00</div>
<div class="t" style="left:494.50px;top:445.00px;font-size:13px;color:#000;transform:scaleX(1.1523);">Total</div>
<div class="t" style="left:600.10px;top:441.00px;font-size:13px;color:#000;transform:scaleX(1.1027);">15383.13</div>
<div class="t" style="left:500.00px;top:478.00px;font-size:13px;color:#000;transform:scaleX(1.0489);">NRC</div>
<div class="t" style="left:631.70px;top:477.00px;font-size:13px;color:#000;transform:scaleX(1.1147);">0.00</div>
<div class="t" style="left:736.90px;top:230.00px;font-size:13px;font-weight:bold;color:#fff;transform:scaleX(1.1920);">Payment History</div>
<div class="t" style="left:713.50px;top:254.00px;font-size:13px;color:#000;transform:scaleX(1.1259);">Date</div>
<div class="t" style="left:797.50px;top:254.00px;font-size:13px;color:#000;transform:scaleX(1.0997);">Method</div>
<div class="t" style="left:934.20px;top:254.00px;font-size:13px;color:#000;transform:scaleX(1.0956);">Amount</div>
<div class="t" style="left:171.10px;top:544.00px;font-size:13px;color:#000;transform:scaleX(1.0696);">Review / Reverse</div>
<div class="t" style="left:324.40px;top:544.00px;font-size:13px;color:#000;transform:scaleX(1.0725);">Client Balances</div>
<div class="t" style="left:461.20px;top:544.00px;font-size:13px;color:#000;transform:scaleX(1.1488);">Project Interest</div>
<div class="t" style="left:612.50px;top:544.00px;font-size:13px;color:#000;transform:scaleX(1.0910);">Claim Total</div>
<div class="t" style="left:758.00px;top:544.00px;font-size:13px;color:#000;transform:scaleX(1.1112);">Settings</div>
<div class="t" style="left:881.50px;top:544.00px;font-size:13px;color:#000;transform:scaleX(1.1055);">Additional...</div>
<div class="t" style="left:30.70px;top:578.00px;font-size:12px;color:#000;transform:scaleX(0.9258);">22:11:55</div>
<div class="t" style="left:520.90px;top:578.00px;font-size:12px;color:#000;transform:scaleX(0.9907);">Debtor Name Order</div>
<div class="t" style="left:871.40px;top:578.00px;font-size:12px;color:#000;transform:scaleX(0.8258);">LJR</div>
<div class="t" style="left:908.50px;top:578.00px;font-size:12px;color:#000;transform:scaleX(0.9651);">04/30/2016</div>
</body></html>
